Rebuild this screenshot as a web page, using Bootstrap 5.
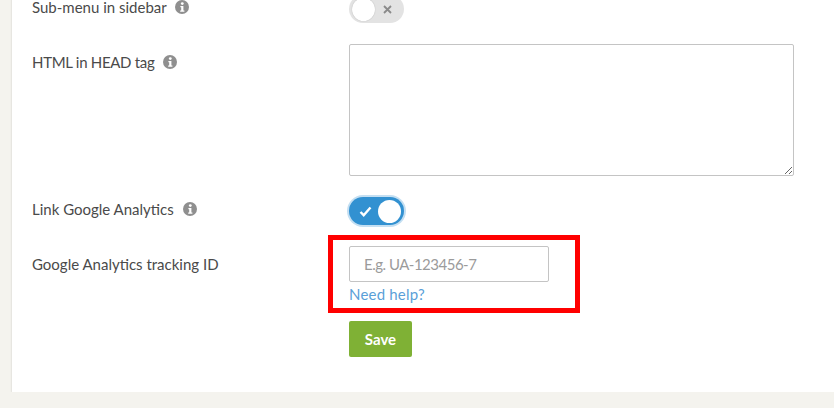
<!DOCTYPE html>
<html lang="en">
<head>
  <meta charset="UTF-8" />
  <meta name="viewport" content="width=device-width, initial-scale=1" />
  <title>Site settings</title>
  <link href="https://cdn.jsdelivr.net/npm/bootstrap@5.3.0/dist/css/bootstrap.min.css" rel="stylesheet" />
  <style>
    body { background-color: #f4f3ee; font-family: "Lato", "Liberation Sans", sans-serif; font-size: 15px; color: #4a4a4a; overflow: hidden; }
    .panel { background: #fff; margin: -5px -10px 0 12px; padding: 0 0 35px 20px; box-shadow: 0 1px 2px rgba(0,0,0,.16); }
    .field-row { margin-bottom: 21px; }
    .field-label { width: 317px; flex: none; line-height: 20px; padding-top: 8px; }
    .field-label.tight { padding-top: 2px; }
    .field-label.first { padding-top: 5px; line-height: 14px; }
    .caps-tight { letter-spacing: -.3px; }
    .info-ico { width: 14px; height: 14px; margin-left: 5px; vertical-align: -1px; }
    .toggle { display: flex; align-items: center; justify-content: space-between; width: 55px; height: 28px; border-radius: 14px; padding: 0 3px; }
    .toggle.off { background: #e3e3e3; padding-right: 12px; }
    .toggle.off .toggle-knob { box-shadow: 0 0 1px rgba(0,0,0,.3); }
    .toggle.on { background: #3291d1; padding-left: 10px; box-shadow: 0 0 0 2px #c4dff2; }
    .toggle-knob { width: 23px; height: 23px; border-radius: 50%; background: #fff; }
    .html-box { width: 445px; height: 132px; border: 1px solid #c4c4c4; border-radius: 2px; display: block; }
    .id-input { width: 200px; height: 36px; border: 1px solid #c4c4c4; border-radius: 2px; padding: 0 14px; font-size: 15px; letter-spacing: -.5px; }
    .id-input::placeholder { color: #9b9b9b; opacity: 1; }
    .help-link { color: #5a9fd8; text-decoration: none; display: block; line-height: 20px; margin-top: 2px; letter-spacing: .2px; }
    .id-wrap { position: relative; margin-bottom: 17px; }
    .red-mark { position: absolute; left: -21px; top: -11px; width: 252px; height: 78px; border: 5px solid #f00; pointer-events: none; }
    .save-btn { background: #7fb135; color: #fff; font-weight: 700; font-size: 15px; width: 63px; height: 36px; border: 0; border-radius: 2px; padding: 0; }
  </style>
</head>
<body>
  <div class="panel">
    <div class="d-flex field-row">
      <div class="field-label first">Sub-menu in sidebar <svg class="info-ico" viewBox="0 0 14 14"><circle cx="7" cy="7" r="7" fill="#8f8f8f"/><circle cx="7.3" cy="3.6" r="1.4" fill="#fff"/><path d="M5.4 6h3v4.6h1v1.2H5.2v-1.2h1V7.2h-.8z" fill="#fff"/></svg></div>
      <div class="toggle off"><span class="toggle-knob"></span><svg width="9" height="9" viewBox="0 0 9 9"><path d="M1 1l7 7M8 1L1 8" stroke="#8a8a8a" stroke-width="1.8"/></svg></div>
    </div>
    <div class="d-flex field-row">
      <div class="field-label"><span class="caps-tight">HTML in HEAD tag</span> <svg class="info-ico" viewBox="0 0 14 14"><circle cx="7" cy="7" r="7" fill="#8f8f8f"/><circle cx="7.3" cy="3.6" r="1.4" fill="#fff"/><path d="M5.4 6h3v4.6h1v1.2H5.2v-1.2h1V7.2h-.8z" fill="#fff"/></svg></div>
      <textarea class="html-box"></textarea>
    </div>
    <div class="d-flex field-row">
      <div class="field-label tight">Link Google Analytics <svg class="info-ico" viewBox="0 0 14 14"><circle cx="7" cy="7" r="7" fill="#8f8f8f"/><circle cx="7.3" cy="3.6" r="1.4" fill="#fff"/><path d="M5.4 6h3v4.6h1v1.2H5.2v-1.2h1V7.2h-.8z" fill="#fff"/></svg></div>
      <div class="toggle on"><svg width="13" height="11" viewBox="0 0 13 11"><path d="M1.5 6l3.2 3.2L11.5 1.5" fill="none" stroke="#fff" stroke-width="2.4"/></svg><span class="toggle-knob"></span></div>
    </div>
    <div class="d-flex">
      <div class="field-label">Google Analytics tracking ID</div>
      <div>
        <div class="id-wrap">
          <input class="id-input d-block" type="text" placeholder="E.g. UA-123456-7" />
          <a class="help-link" href="#">Need help?</a>
          <div class="red-mark"></div>
        </div>
        <button type="button" class="btn save-btn">Save</button>
      </div>
    </div>
  </div>
  <script src="https://cdn.jsdelivr.net/npm/bootstrap@5.3.0/dist/js/bootstrap.bundle.min.js"></script>
</body>
</html>
